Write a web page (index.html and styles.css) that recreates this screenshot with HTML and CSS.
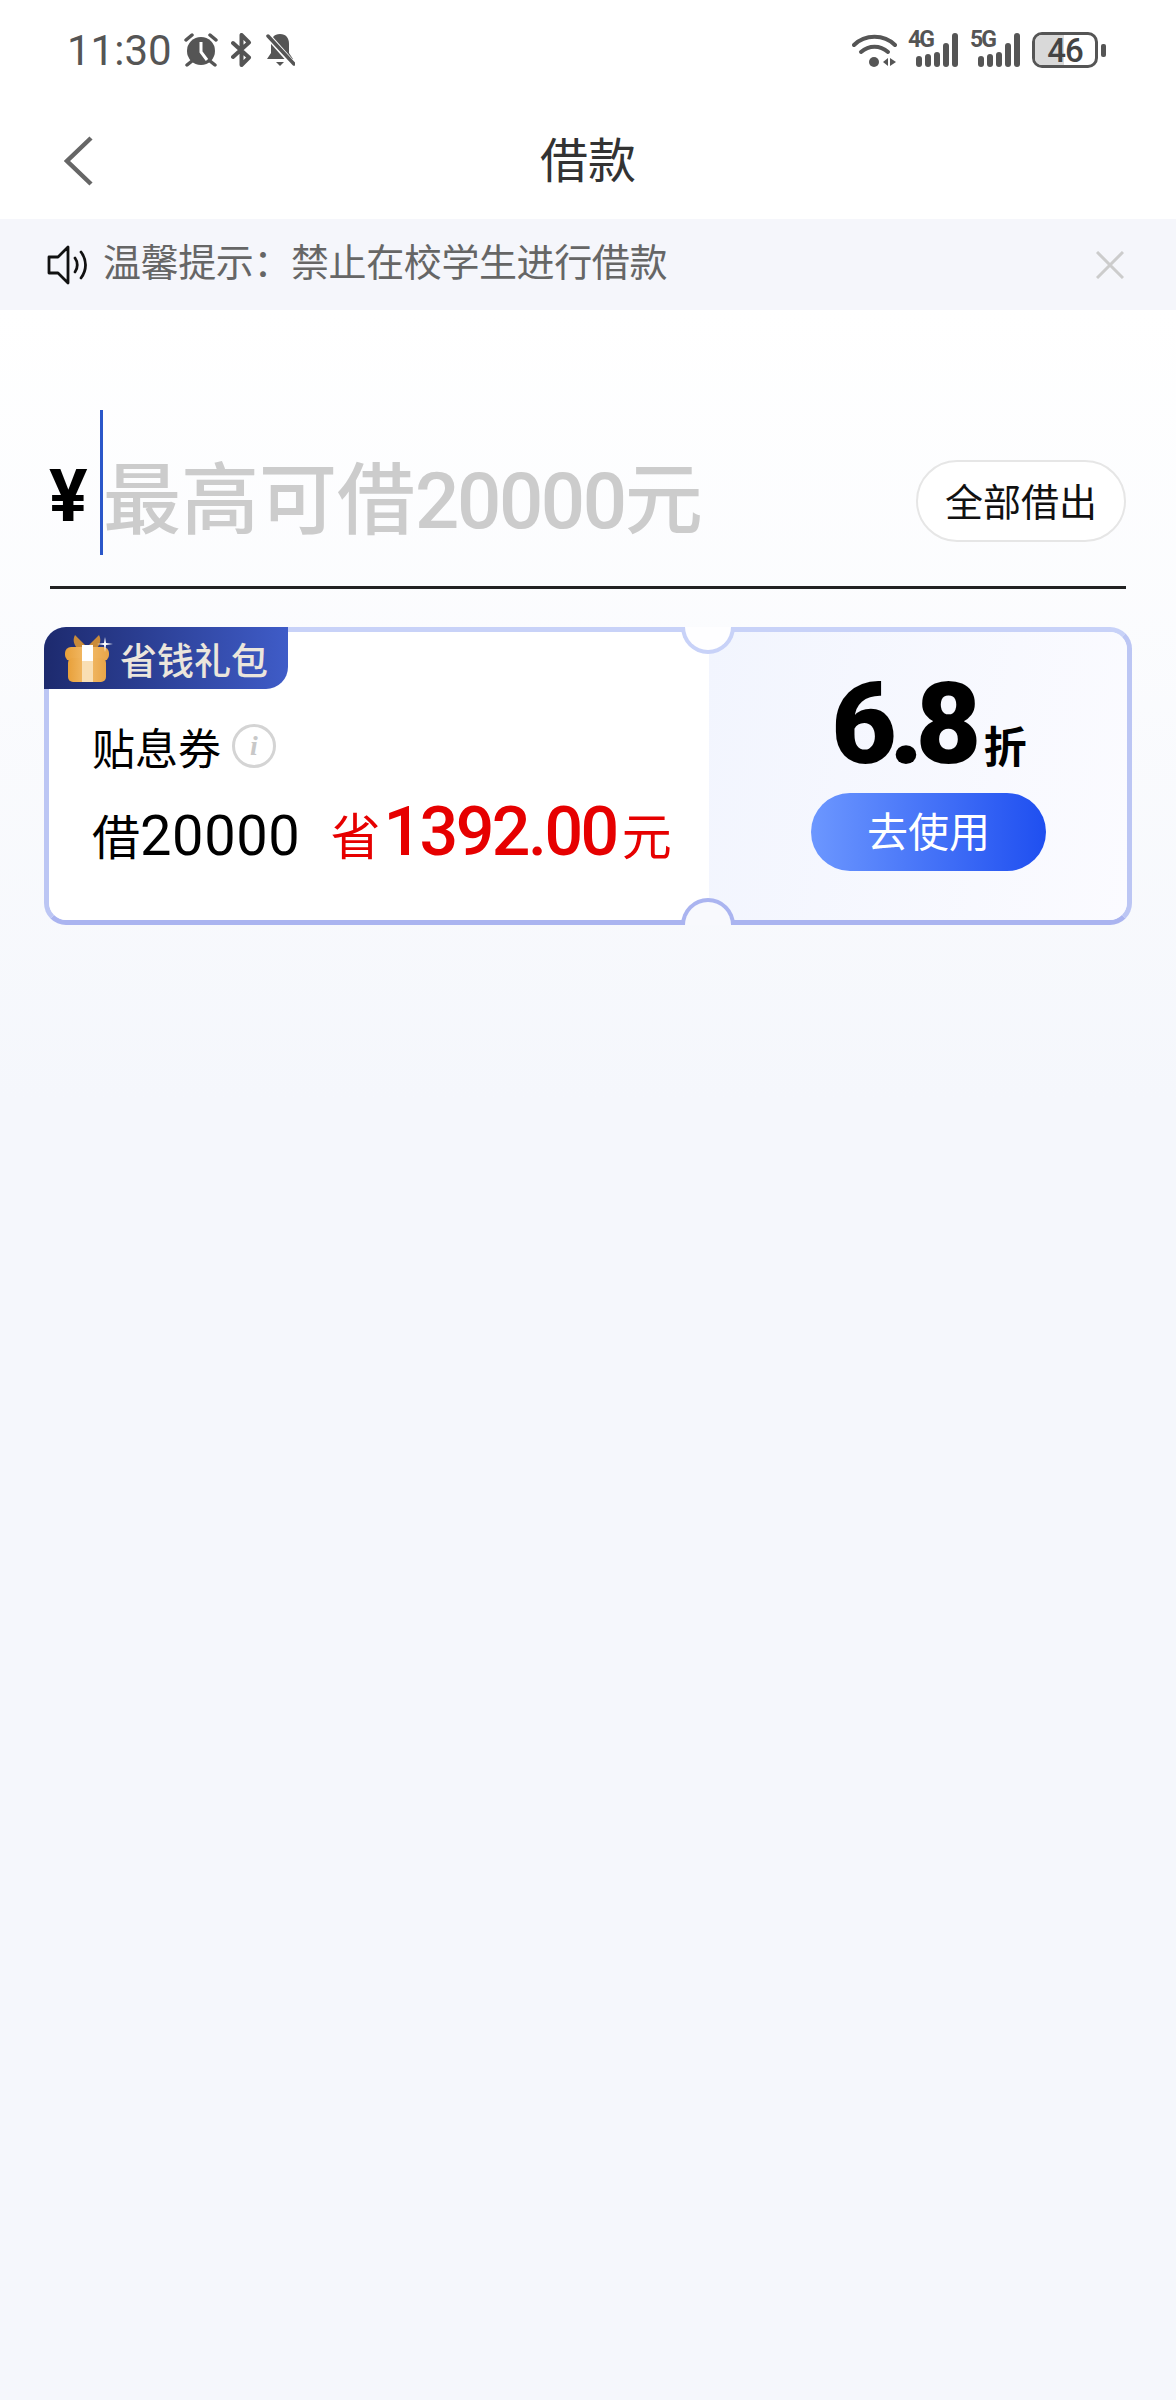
FILE: index.html
```html
<!DOCTYPE html>
<html lang="zh-CN">
<head>
    <meta charset="UTF-8">
    <meta name="viewport" content="width=device-width, initial-scale=1.0">
    <title>借款</title>
    <link rel="stylesheet" href="styles.css">
</head>
<body>
    <header class="status-bar">
        <div class="status-left">
            <span class="time">11:30</span>
            <svg class="icon-alarm" viewBox="0 0 36 34">
                <circle cx="18" cy="18" r="14" fill="#555"/>
                <path d="M18 9v10l6 8" fill="none" stroke="#fff" stroke-width="3"/>
                <path d="M3 7l6-5M33 7l-6-5M4 32l5-4M32 32l-5-4" fill="none" stroke="#555" stroke-width="3.500" stroke-linecap="round"/>
            </svg>
            <svg class="icon-bt" viewBox="0 0 22 34">
                <path d="M2 24L18 9.500 10.500 2v30l7.500-7.500L2 10" fill="none" stroke="#555" stroke-width="4" stroke-linejoin="round" stroke-linecap="round"/>
            </svg>
            <svg class="icon-bell" viewBox="0 0 30 34">
                <path d="M15 1c6 0 9 4 9 10v9l4 6H2l4-6v-9c0-6 3-10 9-10z" fill="#555"/>
                <path d="M11 29h8l-4 4z" fill="#555"/>
                <path d="M3 3l25 28" stroke="#fff" stroke-width="6"/>
                <path d="M3 3l26 28" stroke="#555" stroke-width="3.500" stroke-linecap="round"/>
            </svg>
        </div>
        <div class="status-right">
            <svg class="icon-wifi" viewBox="0 0 45 34">
                <path d="M2 12C13 1 32 1 43 12" fill="none" stroke="#555" stroke-width="4" stroke-linecap="round"/>
                <path d="M9 19c8-7 19-7 27 0" fill="none" stroke="#555" stroke-width="4" stroke-linecap="round"/>
                <circle cx="22" cy="29" r="5" fill="#555"/>
                <path d="M36 25v8l-5-4zM38 25v8l6-4z" fill="#555"/>
            </svg>
            <div class="signal">
                <span class="signal-label">4G</span>
                <span class="bar bar-1"></span><span class="bar bar-2"></span><span class="bar bar-3"></span><span class="bar bar-4"></span><span class="bar bar-5"></span>
            </div>
            <div class="signal">
                <span class="signal-label">5G</span>
                <span class="bar bar-1"></span><span class="bar bar-2"></span><span class="bar bar-3"></span><span class="bar bar-4"></span><span class="bar bar-5"></span>
            </div>
            <div class="battery">
                <div class="battery-body">
                    <span class="battery-fill"></span>
                    <span class="battery-level">46</span>
                </div>
                <span class="battery-nub"></span>
            </div>
        </div>
    </header>

    <nav class="nav-bar">
        <svg class="icon-back" viewBox="0 0 30 50">
            <path d="M27 2L3 25l24 23" fill="none" stroke="#666" stroke-width="4.500"/>
        </svg>
        <h1 class="nav-title">借款</h1>
    </nav>

    <div class="notice">
        <svg class="icon-speaker" viewBox="0 0 42 42">
            <path d="M2 13h9L21 3v36L11 29H2z" fill="none" stroke="#111" stroke-width="2.800" stroke-linejoin="round"/>
            <path d="M28 14c3 4 3 10 0 14M34 8c6 8 6 18 0 26" fill="none" stroke="#111" stroke-width="2.800" stroke-linecap="round"/>
        </svg>
        <span class="notice-text">温馨提示：禁止在校学生进行借款</span>
        <svg class="icon-close" viewBox="0 0 28 28">
            <path d="M1 1l26 26M27 1L1 27" stroke="#ccc" stroke-width="3"/>
        </svg>
    </div>

    <main class="content">
        <div class="amount-row">
            <span class="currency">¥</span>
            <span class="caret"></span>
            <span class="placeholder">最高可借<span class="placeholder-num">20000</span>元</span>
            <button class="all-button">全部借出</button>
        </div>
        <div class="divider"></div>

        <section class="ticket">
            <div class="tag">
                <svg class="icon-gift" viewBox="0 0 50 48">
                    <defs>
                        <linearGradient id="gift-box" x1="0" y1="0" x2="1" y2="0">
                            <stop offset="0" stop-color="#e8a03a"/>
                            <stop offset="0.5" stop-color="#f3bc6a"/>
                            <stop offset="1" stop-color="#e8a548"/>
                        </linearGradient>
                    </defs>
                    <path d="M13 14C9 9 9 5 11 1l12 12zM33 14c4-5 4-9 2-13L23 13z" fill="#c98b3a"/>
                    <rect x="1" y="13" width="44" height="14" rx="6" fill="url(#gift-box)"/>
                    <rect x="4" y="24" width="38" height="24" rx="5" fill="url(#gift-box)"/>
                    <rect x="18" y="11" width="11" height="16" fill="#fff"/>
                    <rect x="18" y="27" width="11" height="21" fill="#f9dfb4"/>
                    <path d="M41 3l1 6 7 1-7 1-1 7-1-7-7-1 7-1z" fill="#fff"/>
                </svg>
                <span class="tag-text">省钱礼包</span>
            </div>
            <div class="ticket-main">
                <div class="ticket-title">
                    <span>贴息券</span>
                    <span class="info-icon">i</span>
                </div>
                <div class="ticket-detail">
                    <span class="borrow"><span class="cjk">借</span>20000</span>
                    <span class="save"><span class="cjk save-cjk">省</span><span class="save-num">1392.00</span><span class="cjk save-cjk">元</span></span>
                </div>
            </div>
            <div class="ticket-side">
                <div class="discount"><span class="discount-num">6.8</span><span class="discount-unit">折</span></div>
                <button class="use-button">去使用</button>
            </div>
            <span class="notch notch-top"></span>
            <span class="notch notch-bottom"></span>
        </section>
    </main>
</body>
</html>
```

FILE: styles.css
```css
* {
    box-sizing: border-box;
}
body {
    margin: 0;
    min-height: 2400px;
    font-family: "Noto Sans CJK SC", "Noto Sans", sans-serif;
    background: linear-gradient(180deg, #fff 0, #fff 310px, #f5f7fc 1100px, #f5f7fc 100%);
}
.status-bar {
    height: 100px;
    padding: 0 70px 0 67px;
    display: flex;
    justify-content: space-between;
    align-items: center;
    background: #fff;
}
.status-left, .status-right {
    display: flex;
    align-items: center;
}
.time {
    font-family: Roboto, sans-serif;
    font-size: 42px;
    color: #555;
    margin-right: 11px;
}
.icon-alarm {
    width: 36px;
    height: 34px;
    margin-right: 12px;
}
.icon-bt {
    width: 22px;
    height: 34px;
    margin-right: 12px;
}
.icon-bell {
    width: 30px;
    height: 34px;
}
.icon-wifi {
    width: 45px;
    height: 34px;
    margin-right: 11px;
}
.signal {
    position: relative;
    width: 50px;
    height: 34px;
    margin-right: 12px;
    display: flex;
    align-items: flex-end;
    justify-content: flex-end;
    gap: 3px;
}
.signal-label {
    position: absolute;
    left: 0;
    top: -4px;
    font-family: Roboto, sans-serif;
    font-size: 23px;
    line-height: 22px;
    font-weight: 700;
    letter-spacing: -2px;
    color: #555;
}
.bar {
    width: 6px;
    border-radius: 3px;
    background: #555;
}
.bar-1 { height: 11px; }
.bar-2 { height: 13px; }
.bar-3 { height: 15px; }
.bar-4 { height: 24px; }
.bar-5 { height: 34px; }
.battery {
    display: flex;
    align-items: center;
    gap: 3px;
}
.battery-body {
    position: relative;
    width: 66px;
    height: 36px;
    border: 3px solid #555;
    border-radius: 10px;
    overflow: hidden;
    display: flex;
    align-items: center;
    justify-content: center;
}
.battery-fill {
    position: absolute;
    left: 0;
    top: 0;
    bottom: 0;
    width: 29px;
    background: #d9d9d9;
}
.battery-level {
    position: relative;
    font-family: Roboto, sans-serif;
    font-size: 33px;
    font-weight: 500;
    letter-spacing: -1px;
    color: #444;
}
.battery-nub {
    width: 5px;
    height: 13px;
    border-radius: 2px;
    background: #555;
}
.nav-bar {
    position: relative;
    height: 119px;
    padding-left: 64px;
    display: flex;
    align-items: center;
    justify-content: center;
    background: #fff;
}
.icon-back {
    position: absolute;
    left: 64px;
    top: 36px;
    width: 30px;
    height: 50px;
}
.nav-title {
    margin: 0 64px 6px 0;
    font-size: 48px;
    font-weight: 400;
    color: #333;
}
.notice {
    height: 91px;
    padding: 0 52px 0 47px;
    display: flex;
    align-items: center;
    background: #f5f6fb;
}
.icon-speaker {
    width: 42px;
    height: 42px;
    margin-right: 14px;
}
.notice-text {
    flex: 1;
    padding-bottom: 10px;
    font-size: 38px;
    letter-spacing: -0.4px;
    color: #666;
}
.icon-close {
    width: 28px;
    height: 28px;
}
.content {
    padding: 100px 44px 0;
}
.amount-row {
    height: 145px;
    padding: 0 6px;
    display: flex;
    align-items: center;
}
.currency {
    width: 50px;
    margin-top: 28px;
    margin-left: -1px;
    margin-right: 1px;
    font-family: Roboto, sans-serif;
    font-size: 72px;
    font-weight: 700;
    color: #000;
}
.caret {
    width: 3px;
    height: 145px;
    background: #2b57c9;
}
.placeholder {
    flex: 1;
    margin-top: 32px;
    font-family: "Noto Sans CJK SC", sans-serif;
    font-size: 78px;
    font-weight: 500;
    line-height: 1.3;
    color: #ccc;
}
.placeholder-num {
    font-family: Roboto, sans-serif;
    letter-spacing: -2.400px;
}
.all-button {
    align-self: flex-start;
    width: 210px;
    height: 82px;
    margin-top: 50px;
    padding: 0 0 4px;
    border: 2px solid #e6e6e6;
    border-radius: 41px;
    background: #fff;
    font-family: "Noto Sans CJK SC", sans-serif;
    font-size: 38px;
    color: #111;
}
.divider {
    height: 3px;
    margin: 31px 6px 38px;
    background: #222;
}
.ticket {
    position: relative;
    width: 1088px;
    height: 298px;
    display: flex;
    border: 5px solid;
    border-color: #c8d2f8 #bcc6f4 #aab4f0;
    border-radius: 22px;
}
.tag {
    position: absolute;
    left: -5px;
    top: -5px;
    width: 244px;
    height: 62px;
    padding-left: 20px;
    display: flex;
    align-items: center;
    gap: 6px;
    border-radius: 22px 0 22px 0;
    background: linear-gradient(90deg, #1d2a6e, #3f5cc8);
}
.icon-gift {
    width: 50px;
    height: 48px;
}
.tag-text {
    padding-top: 3px;
    font-size: 37px;
    font-weight: 500;
    line-height: 1;
    color: #ebe6dc;
}
.ticket-main {
    width: 660px;
    padding: 91px 0 0 43px;
    border-radius: 18px 0 0 18px;
    background: #fff;
}
.ticket-title {
    height: 46px;
    display: flex;
    align-items: center;
    gap: 11px;
    font-size: 43px;
    line-height: 46px;
    color: #000;
}
.info-icon {
    width: 44px;
    height: 44px;
    display: flex;
    align-items: center;
    justify-content: center;
    border: 3px solid #d4d4d4;
    border-radius: 50%;
    font-family: "Liberation Serif", serif;
    font-size: 28px;
    font-style: italic;
    font-weight: 700;
    color: #c8c8c8;
}
.ticket-detail {
    margin-top: 23px;
    display: flex;
    align-items: baseline;
    gap: 30px;
}
.cjk {
    font-family: "Noto Sans CJK SC", sans-serif;
    font-size: 48px;
    letter-spacing: 0;
}
.save-cjk {
    font-size: 50px;
}
.borrow {
    font-family: Roboto, sans-serif;
    font-size: 56px;
    letter-spacing: 0.600px;
    color: #000;
}
.save {
    font-family: Roboto, sans-serif;
    color: #e60000;
}
.save-num {
    margin: 0 5px 0 3px;
    font-size: 68px;
    font-weight: 500;
    letter-spacing: -2.500px;
}
.ticket-side {
    flex: 1;
    padding: 35px 0 0 21px;
    display: flex;
    flex-direction: column;
    align-items: center;
    border-radius: 0 18px 18px 0;
    background: linear-gradient(100deg, #f2f5fe, #fbfbff);
}
.discount {
    height: 116px;
    margin-left: 1px;
    display: flex;
    align-items: flex-end;
    color: #000;
}
.discount-num {
    font-family: Roboto, sans-serif;
    font-size: 113px;
    line-height: 116px;
    font-weight: 900;
    letter-spacing: -7.500px;
}
.discount-unit {
    margin: 0 0 14px 10px;
    font-size: 43px;
    line-height: 50px;
    font-weight: 700;
}
.use-button {
    width: 235px;
    height: 78px;
    margin-top: 10px;
    padding: 0 0 6px;
    border: none;
    border-radius: 39px;
    background: linear-gradient(90deg, #6c97ff, #1f4ff0);
    font-family: "Noto Sans CJK SC", sans-serif;
    font-size: 41px;
    color: #fff;
}
.notch {
    position: absolute;
    left: 632px;
    width: 54px;
    height: 27px;
    border: 4px solid;
}
.notch-top {
    top: -5px;
    border-top: none;
    border-color: #c8d2f8;
    border-radius: 0 0 27px 27px;
    background: #fefeff;
}
.notch-bottom {
    bottom: -5px;
    border-bottom: none;
    border-color: #aab4f0;
    border-radius: 27px 27px 0 0;
    background: #f8f9fd;
}
```
